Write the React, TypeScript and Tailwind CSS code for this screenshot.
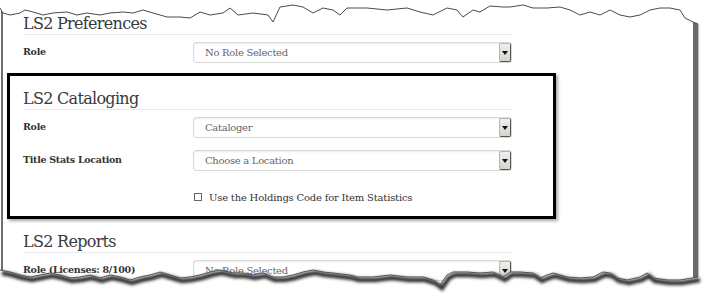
import React from "react";

const serif = "font-['DejaVu_Serif','Liberation_Serif',serif]";

function Caret() {
  return (
    <div className="flex h-full w-[12px] items-center justify-center rounded-[2px] border border-[#b5b5b5] border-r-[#555] border-b-[#555] bg-gradient-to-b from-[#f1efea] to-[#d6d3cc]">
      <svg width="6" height="4" viewBox="0 0 6 4">
        <path d="M0 0 H6 L3 4 Z" fill="#111" />
      </svg>
    </div>
  );
}

function Select({ value }: { value: string }) {
  return (
    <div className="flex h-[21px] w-[319px] items-center justify-between rounded-[3px] border border-[#d9d9d9] bg-white pl-[11px] shadow-[inset_0_1px_2px_rgba(0,0,0,0.08)]">
      <span className={`${serif} text-[10px] tracking-[-0.3px] text-[#666]`}>{value}</span>
      <Caret />
    </div>
  );
}

function Row({ label, value, className = "" }: { label: string; value: string; className?: string }) {
  return (
    <div className={`flex items-center ${className}`}>
      <div className={`${serif} w-[170px] text-[9.5px] font-bold tracking-[-0.3px] text-[#333]`}>{label}</div>
      <Select value={value} />
    </div>
  );
}

function Heading({ title, className = "" }: { title: string; className?: string }) {
  return (
    <div className={`border-b border-[#e9e9e9] ${className}`}>
      <div className={`${serif} h-[20px] text-[16px] leading-[20px] tracking-[-0.7px] text-[#3a3a3a]`}>{title}</div>
    </div>
  );
}

const topPts =
  "0,8 3,13 10,15 20,13 25,10 33,12 43,15 53,13 67,12 77,15 87,13 100,15 110,13 123,12 133,13 143,10 153,13 167,17 180,17 190,18 200,12 210,15 223,13 230,8 238,15 253,13 268,15 273,22 280,7 293,5 303,7 313,13 323,8 333,10 340,15 347,8 367,8 387,10 407,8 420,12 433,15 447,8 457,10 463,17 473,10 480,12 490,6 503,7 510,7 523,5 533,8 547,8 560,7 570,10 580,15 590,12 600,15 610,10 620,15 630,17 640,15 650,10 660,8 670,8 680,10 685,18 693,22 698,24";

const botPts =
  "0,270 10,272 20,275 30,277 40,275 50,273 60,275 70,278 80,277 90,275 100,278 110,275 120,277 130,280 140,277 150,275 160,272 170,275 180,278 190,277 200,275 210,272 220,270 233,273 243,273 253,275 263,273 273,277 283,277 293,275 303,272 313,270 323,272 333,273 350,275 357,277 373,277 390,275 407,277 423,277 433,280 440,285 447,275 453,272 467,272 480,273 493,272 503,277 510,272 520,272 533,273 540,278 547,275 553,273 567,277 580,278 593,277 603,272 610,273 617,278 627,280 640,277 647,273 653,278 667,280 680,280 692,278 698,277";

export default function App() {
  return (
    <div className="relative h-[302px] w-[706px] overflow-hidden bg-white">
      <div className="relative ml-px h-[302px] w-[697px] border-l-2 border-r-[5px] border-l-[#6f6f6f] border-r-[#6a6a6a] bg-white pl-[20px] pt-[14px] shadow-[1px_0_1px_rgba(0,0,0,0.25)]">
        <div className="w-[489px]">
          <Heading title="LS2 Preferences" />
          <Row label="Role" value="No Role Selected" className="mt-[7px]" />

          <Heading title="LS2 Cataloging" className="mt-[26px]" />
          <Row label="Role" value="Cataloger" className="mt-[7px]" />
          <Row label="Title Stats Location" value="Choose a Location" className="mt-[12px]" />
          <div className="ml-[171px] mt-[19px] flex h-[14px] items-center gap-[7px]">
            <div className="h-[8px] w-[8px] border border-[#666] bg-white" />
            <span className={`${serif} text-[10px] tracking-[-0.2px] text-[#333]`}>
              Use the Holdings Code for Item Statistics
            </span>
          </div>

          <Heading title="LS2 Reports" className="mt-[28px]" />
          <Row label="Role (Licenses: 8/100)" value="No Role Selected" className="mt-[7px]" />
        </div>
      </div>

      {/* annotation box */}
      <div className="absolute left-[7px] top-[73px] h-[146px] w-[549px] border-[3px] border-black shadow-[2px_2px_3px_rgba(0,0,0,0.35)]" />

      {/* torn edges */}
      <svg className="absolute left-0 top-0" width="706" height="302" viewBox="0 0 706 302">
        <defs>
          <filter id="blur" x="-5%" y="-50%" width="110%" height="200%">
            <feGaussianBlur stdDeviation="1.6" />
          </filter>
        </defs>
        <polygon points={`0,0 706,0 706,24 ${topPts.split(" ").reverse().join(" ")}`} fill="#fff" />
        <polyline points={topPts} fill="none" stroke="#4a4a4a" strokeWidth="1" />
        <polygon points={`${botPts} 706,277 706,302 0,302`} fill="#fff" />
        <g transform="translate(2,3)" filter="url(#blur)">
          <polyline points={botPts} fill="none" stroke="#2e2e2e" strokeWidth="4.5" />
        </g>
        <polyline points={botPts} fill="none" stroke="#555" strokeWidth="1" />
      </svg>
    </div>
  );
}
